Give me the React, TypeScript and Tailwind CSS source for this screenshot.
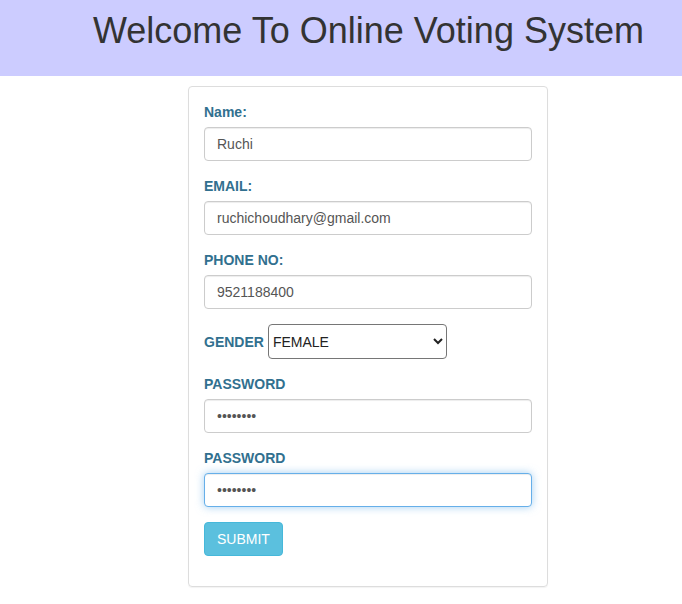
import React from 'react';

const labelCls = "block mb-[5px] text-[14px] leading-[20px] font-bold text-[#31708f]";
const inputCls =
  "block w-full h-[34px] px-[12px] py-[6px] text-[14px] leading-[20px] text-[#555] bg-white border border-[#ccc] rounded-[4px] shadow-[inset_0_1px_1px_rgba(0,0,0,0.075)] outline-none";

export default function App() {
  return (
    <div className="min-h-[604px] bg-white font-['Liberation_Sans',Arial,sans-serif] text-[#333]">
      <header className="h-[76px] bg-[#ccccff] pl-[93px] pt-[11px]">
        <h1 className="text-[36px] leading-[1.1] font-normal text-[#333]">Welcome To Online Voting System</h1>
      </header>

      <div className="ml-[188px] mt-[10px] w-[360px] border border-[#ddd] rounded-[4px] shadow-[0_1px_1px_rgba(0,0,0,0.05)] px-[15px] pt-[15px] pb-[30px]">
        <form onSubmit={(e) => e.preventDefault()}>
          <div className="mb-[15px]">
            <label className={labelCls}>Name:</label>
            <input className={inputCls} type="text" defaultValue="Ruchi" />
          </div>
          <div className="mb-[15px]">
            <label className={labelCls}>EMAIL:</label>
            <input className={inputCls} type="email" defaultValue="ruchichoudhary@gmail.com" />
          </div>
          <div className="mb-[15px]">
            <label className={labelCls}>PHONE NO:</label>
            <input className={inputCls} type="text" defaultValue="9521188400" />
          </div>
          <div className="mb-[15px] flex items-center gap-[4px]">
            <label className="text-[14px] leading-[20px] font-bold text-[#31708f]">GENDER</label>
            <select
              defaultValue="FEMALE"
              className="h-[35px] w-[179px] border border-[#767676] rounded-[4px] bg-white pl-0 text-[14px] text-[#222]"
            >
              <option>MALE</option>
              <option>FEMALE</option>
            </select>
          </div>
          <div className="mb-[15px]">
            <label className={labelCls}>PASSWORD</label>
            <input className={inputCls} type="password" defaultValue="ruchi123" />
          </div>
          <div className="mb-[15px]">
            <label className={labelCls}>PASSWORD</label>
            <input
              autoFocus
              className="block w-full h-[34px] px-[12px] py-[6px] text-[14px] leading-[20px] text-[#555] bg-white border border-[#66afe9] rounded-[4px] shadow-[inset_0_1px_1px_rgba(0,0,0,0.075),0_0_8px_rgba(102,175,233,0.6)] outline-none"
              type="password"
              defaultValue="ruchi123"
            />
          </div>
          <button
            type="submit"
            className="h-[34px] px-[12px] text-[14px] leading-[20px] text-white bg-[#5bc0de] border border-[#46b8da] rounded-[4px]"
          >
            SUBMIT
          </button>
        </form>
      </div>
    </div>
  );
}
